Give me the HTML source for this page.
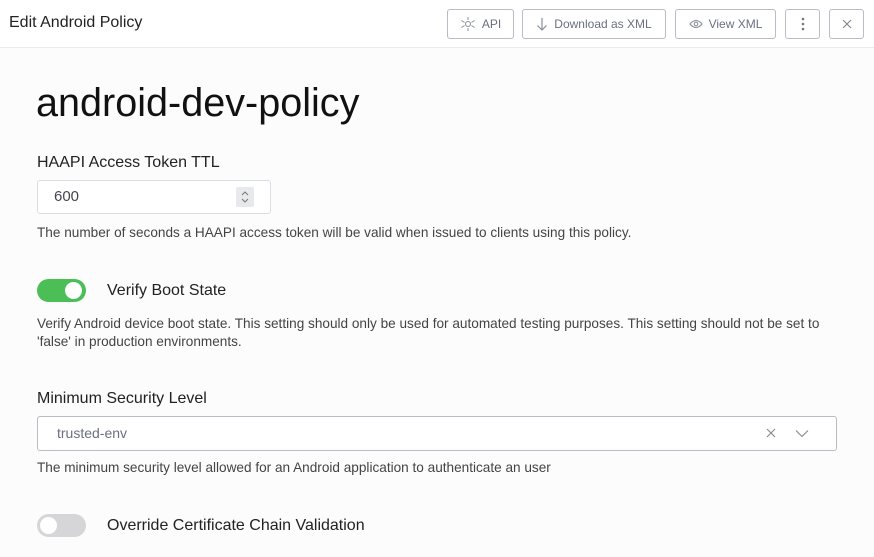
<!DOCTYPE html>
<html><head><style>
*{box-sizing:border-box;margin:0;padding:0}
body{width:874px;height:557px;overflow:hidden;background:#fcfcfc;font-family:"Liberation Sans",sans-serif;color:#222;position:relative}
.hdr{position:absolute;left:0;top:0;width:874px;height:48px;background:#fff;border-bottom:1px solid #ececec}
.ht{position:absolute;left:9px;top:14px;font-size:16px;color:#222}
.btn{position:absolute;top:9px;height:30px;border:1px solid #b9bcc4;border-radius:3px;background:#fff;font-size:12px;color:#6b7080;display:flex;align-items:center;justify-content:center;gap:6px}
.a{position:absolute;white-space:nowrap}
.help{font-size:13.6px;color:#444}
.lbl{font-size:16px;color:#222}
</style></head><body>
<div class="hdr">
<div class="ht">Edit Android Policy</div>
<div class="btn" style="left:447px;width:67px"><svg width="16" height="16" viewBox="0 0 16 16" fill="none" stroke="#8a8f9c" stroke-width="1"><circle cx="8" cy="8" r="2.5"/><path d="M8 1v3M8 12v3M1.5 4.5l3 2M11.5 9.5l3 2M1.5 11.5l3-2M11.5 6.5l3-2"/></svg>API</div>
<div class="btn" style="left:522px;width:144px"><svg width="12" height="14" viewBox="0 0 12 14" fill="none" stroke="#8a8f9c" stroke-width="1.2"><path d="M6 1v12M1.5 8.5L6 13l4.5-4.5"/></svg>Download as XML</div>
<div class="btn" style="left:675px;width:101px"><svg width="14" height="10" viewBox="0 0 14 10" fill="none" stroke="#8a8f9c" stroke-width="1.1"><path d="M1 5q6-7 12 0q-6 7-12 0z"/><circle cx="7" cy="5" r="1.8"/></svg>View XML</div>
<div class="btn" style="left:785px;width:35px"><svg width="4" height="14"><circle cx="2" cy="2" r="1.3" fill="#777"/><circle cx="2" cy="7" r="1.3" fill="#777"/><circle cx="2" cy="12" r="1.3" fill="#777"/></svg></div>
<div class="btn" style="left:829px;width:35px"><svg width="10" height="10" stroke="#888" stroke-width="1.2"><path d="M1 1l8 8M9 1l-8 8"/></svg></div>
</div>
<div class="a" style="left:36px;top:81px;font-size:39.6px;color:#111">android-dev-policy</div>
<div class="a lbl" style="left:37px;top:154px">HAAPI Access Token TTL</div>
<div class="a" style="left:37px;top:180px;width:234px;height:34px;border:1px solid #dcdde2;border-radius:3px;background:#fff"></div>
<div class="a" style="left:54px;top:188px;font-size:15px;color:#445">600</div>
<div class="a" style="left:236px;top:187px;width:18px;height:20px;background:#e8e9ec;border-radius:2px"><svg width="18" height="20" fill="none" stroke="#777" stroke-width="1"><path d="M6 8l3-3 3 3M6 12l3 3 3-3"/></svg></div>
<div class="a help" style="left:37px;top:225px">The number of seconds a HAAPI access token will be valid when issued to clients using this policy.</div>
<div class="a" style="left:37px;top:279px;width:49px;height:23px;border-radius:12px;background:#4bbf56"></div>
<div class="a" style="left:65px;top:282px;width:17px;height:17px;border-radius:50%;background:#fff"></div>
<div class="a lbl" style="left:107px;top:282px">Verify Boot State</div>
<div class="a help" style="left:37px;top:315px;line-height:18px">Verify Android device boot state. This setting should only be used for automated testing purposes. This setting should not be set to<br>'false' in production environments.</div>
<div class="a lbl" style="left:37px;top:390px">Minimum Security Level</div>
<div class="a" style="left:37px;top:416px;width:800px;height:35px;border:1px solid #b9bcc4;border-radius:3px;background:#fff"></div>
<div class="a" style="left:57px;top:425px;font-size:14px;color:#6b7080">trusted-env</div>
<svg class="a" style="left:766px;top:428px" width="10" height="10" stroke="#888" stroke-width="1.1"><path d="M1 1l8 8M9 1l-8 8"/></svg>
<svg class="a" style="left:795px;top:429px" width="14" height="9" fill="none" stroke="#888" stroke-width="1.1"><path d="M1 1.5l6 6 6-6"/></svg>
<div class="a help" style="left:37px;top:460px">The minimum security level allowed for an Android application to authenticate an user</div>
<div class="a" style="left:37px;top:514px;width:49px;height:23px;border-radius:12px;background:#d6d6d8"></div>
<div class="a" style="left:40px;top:517px;width:17px;height:17px;border-radius:50%;background:#fff"></div>
<div class="a lbl" style="left:107px;top:517px">Override Certificate Chain Validation</div>
</body></html>
